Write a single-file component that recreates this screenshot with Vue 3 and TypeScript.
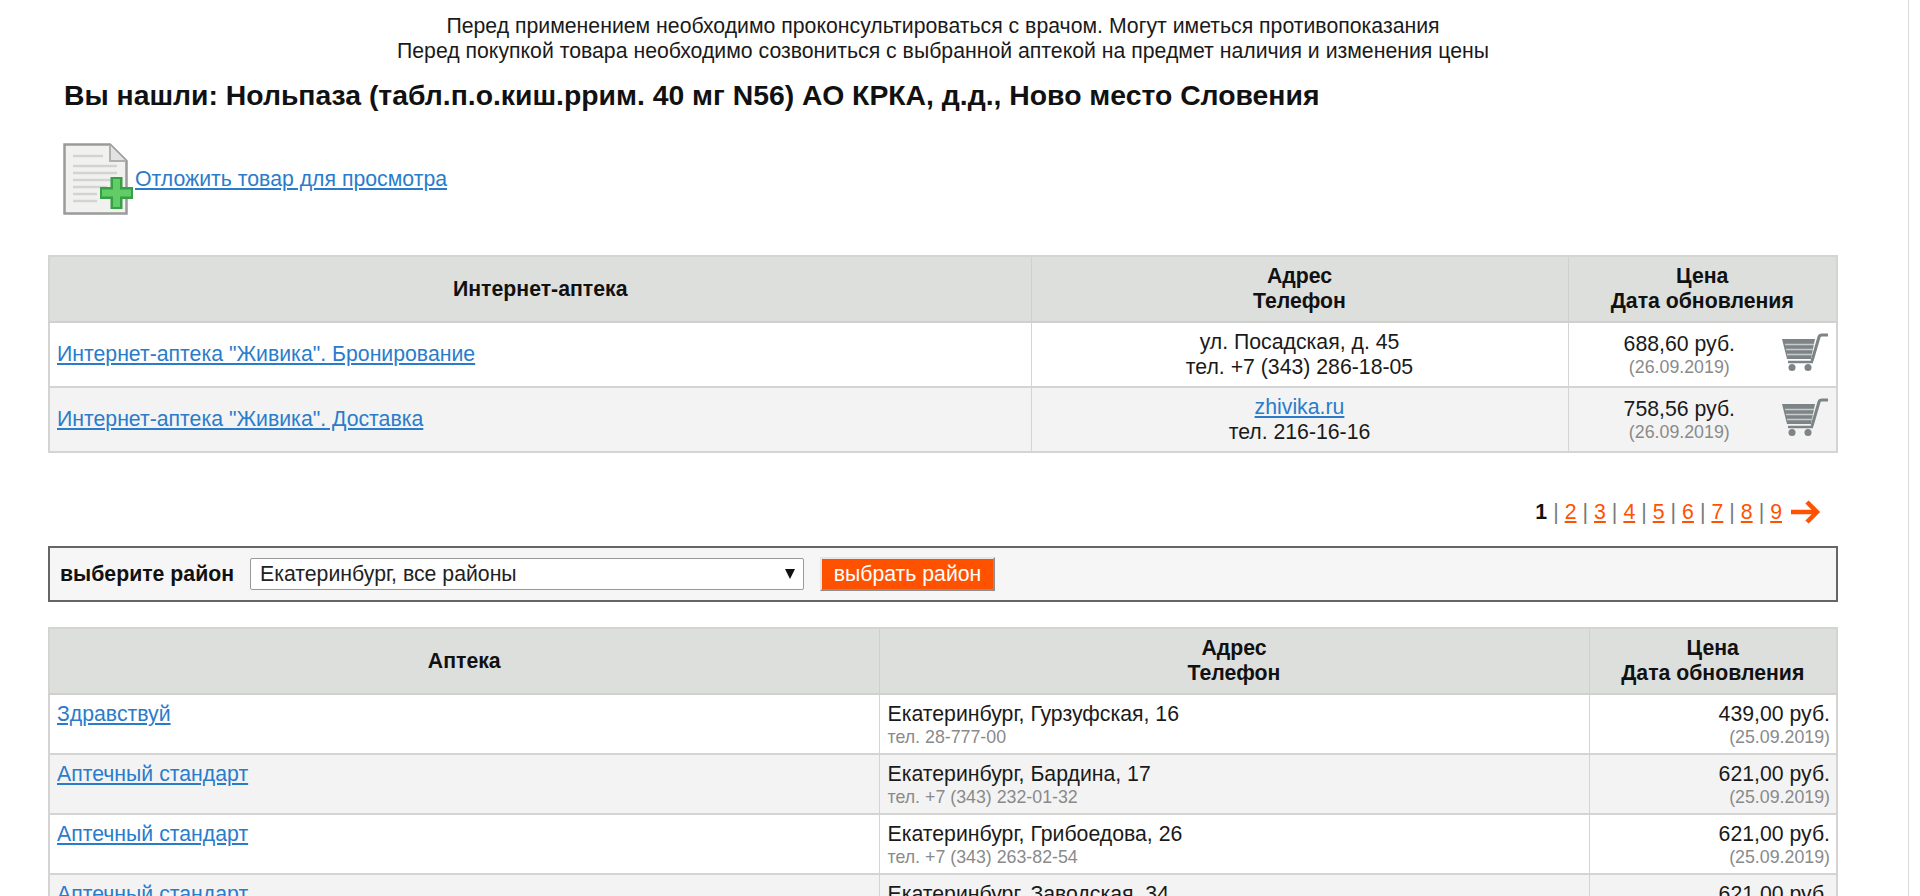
<script setup lang="ts">
interface Offer {
  name: string
  address: string
  phone: string
  price: string
  date: string
}

const offers: Offer[] = [
  { name: 'Здравствуй', address: 'Екатеринбург, Гурзуфская, 16', phone: 'тел. 28-777-00', price: '439,00 руб.', date: '(25.09.2019)' },
  { name: 'Аптечный стандарт', address: 'Екатеринбург, Бардина, 17', phone: 'тел. +7 (343) 232-01-32', price: '621,00 руб.', date: '(25.09.2019)' },
  { name: 'Аптечный стандарт', address: 'Екатеринбург, Грибоедова, 26', phone: 'тел. +7 (343) 263-82-54', price: '621,00 руб.', date: '(25.09.2019)' },
  { name: 'Аптечный стандарт', address: 'Екатеринбург, Заводская, 34', phone: 'тел. +7 (343) 242-10-15', price: '621,00 руб.', date: '(25.09.2019)' },
]

const pages = [2, 3, 4, 5, 6, 7, 8, 9]
</script>

<template>
  <div class="page">
    <div class="notice">
      <div>Перед применением необходимо проконсультироваться с врачом. Могут иметься противопоказания</div>
      <div>Перед покупкой товара необходимо созвониться с выбранной аптекой на предмет наличия и изменения цены</div>
    </div>
    <h1 class="title">Вы нашли: Нольпаза (табл.п.о.киш.ррим. 40 мг N56) АО КРКА, д.д., Ново место Словения</h1>

    <div class="defer">
      <svg class="doc-icon" width="72" height="72" viewBox="0 0 72 72">
        <path d="M1.500 1.500H47L63.500 18V70.500H1.500Z" fill="#f1f2f0" stroke="#9a9a9a" stroke-width="2.500" />
        <path d="M47 2V18H63" fill="#e2e2e2" stroke="#b0b0b0" stroke-width="2" />
        <path d="M10 13H40M10 23H54M10 30H54M10 37H54M10 44H44M10 51H34M10 58H34" stroke="#d3d4d2" stroke-width="2.500" />
        <path d="M37 50H70M53.500 34V66" stroke="#35a045" stroke-width="12" />
        <path d="M39 50H68M53.500 36V64" stroke="#62cc66" stroke-width="7" />
      </svg>
      <a href="#" class="link">Отложить товар для просмотра</a>
    </div>

    <table class="grid net">
      <colgroup>
        <col class="net-c1" />
        <col class="net-c2" />
        <col />
      </colgroup>
      <thead>
        <tr>
          <th>Интернет-аптека</th>
          <th>Адрес<br />Телефон</th>
          <th>Цена<br />Дата обновления</th>
        </tr>
      </thead>
      <tbody>
        <tr>
          <td><a href="#" class="link">Интернет-аптека "Живика". Бронирование</a></td>
          <td class="center">ул. Посадская, д. 45<br />тел. +7 (343) 286-18-05</td>
          <td>
            <div class="buy">
              <div class="buy-price">688,60 руб.<small>(26.09.2019)</small></div>
              <svg class="cart" width="48" height="38" viewBox="0 0 48 38">
                <path d="M1 6H34L30 26H6Z" fill="#7d8486" />
                <path d="M4 11.500H33M5 16.500H32M6 21.500H31" stroke="#c9cccd" stroke-width="1.500" />
                <path d="M31 28L38 4Q38.500 2 41 2H47" fill="none" stroke="#7d8486" stroke-width="3" />
                <path d="M7 29H32" stroke="#7d8486" stroke-width="2.500" />
                <circle cx="11" cy="34.500" r="3.500" fill="#7d8486" />
                <circle cx="27" cy="34.500" r="3.500" fill="#7d8486" />
              </svg>
            </div>
          </td>
        </tr>
        <tr>
          <td><a href="#" class="link">Интернет-аптека "Живика". Доставка</a></td>
          <td class="center"><a href="#" class="link">zhivika.ru</a><br />тел. 216-16-16</td>
          <td>
            <div class="buy">
              <div class="buy-price">758,56 руб.<small>(26.09.2019)</small></div>
              <svg class="cart" width="48" height="38" viewBox="0 0 48 38">
                <path d="M1 6H34L30 26H6Z" fill="#7d8486" />
                <path d="M4 11.500H33M5 16.500H32M6 21.500H31" stroke="#c9cccd" stroke-width="1.500" />
                <path d="M31 28L38 4Q38.500 2 41 2H47" fill="none" stroke="#7d8486" stroke-width="3" />
                <path d="M7 29H32" stroke="#7d8486" stroke-width="2.500" />
                <circle cx="11" cy="34.500" r="3.500" fill="#7d8486" />
                <circle cx="27" cy="34.500" r="3.500" fill="#7d8486" />
              </svg>
            </div>
          </td>
        </tr>
      </tbody>
    </table>

    <div class="pager">
      <b>1</b>
      <template v-for="p in pages" :key="p">
        <span class="sep">|</span>
        <a href="#" class="page-link">{{ p }}</a>
      </template>
      <svg class="next" width="32" height="26" viewBox="0 0 32 26">
        <path d="M2 13H27M18 3L28 13L18 23" fill="none" stroke="#ff5200" stroke-width="4.500" />
      </svg>
    </div>

    <div class="district">
      <b>выберите район</b>
      <div class="select">
        <span>Екатеринбург, все районы</span>
        <span class="arrow"></span>
      </div>
      <button class="pick">выбрать район</button>
    </div>

    <table class="grid pharm">
      <colgroup>
        <col class="ph-c1" />
        <col class="ph-c2" />
        <col />
      </colgroup>
      <thead>
        <tr>
          <th>Аптека</th>
          <th>Адрес<br />Телефон</th>
          <th>Цена<br />Дата обновления</th>
        </tr>
      </thead>
      <tbody>
        <tr v-for="(o, i) in offers" :key="i">
          <td class="top"><a href="#" class="link">{{ o.name }}</a></td>
          <td class="top addr">{{ o.address }}<small>{{ o.phone }}</small></td>
          <td class="top right">{{ o.price }}<small>{{ o.date }}</small></td>
        </tr>
      </tbody>
    </table>
  </div>
</template>

<style>
html,
body {
  background: #fff;
  height: 100%;
  overflow: hidden;
}
</style>

<style scoped>
.page {
  box-sizing: border-box;
  width: 1909px;
  height: 896px;
  overflow: hidden;
  padding: 14px 70px 0 48px;
  border-right: 1px solid #d9d9d9;
  font-family: "Liberation Sans", Arial, sans-serif;
  font-size: 21.25px;
  color: #1a1a1a;
}
.notice {
  text-align: center;
  line-height: 25px;
}
.title {
  margin: 15px 0 0 16px;
  font-size: 28.35px;
  line-height: 32px;
  font-weight: bold;
  color: #111;
}
.defer {
  display: flex;
  align-items: center;
  margin: 32px 0 0 15px;
  height: 72px;
}
.doc-icon {
  flex: none;
}
.link {
  color: #2a7ccb;
  text-decoration: underline;
}
.grid {
  width: 100%;
  border-collapse: collapse;
  table-layout: fixed;
  border: 2px solid #d4d5d3;
}
.net {
  margin-top: 40px;
}
.net-c1 {
  width: 982px;
}
.net-c2 {
  width: 537px;
}
.ph-c1 {
  width: 830px;
}
.ph-c2 {
  width: 710px;
}
th {
  height: 66px;
  padding: 0 8px;
  box-sizing: border-box;
  background: #dddfdd;
  border: 1px solid #d0d1cf;
  border-bottom-width: 2px;
  font-size: 21.25px;
  line-height: 25px;
  font-weight: bold;
  color: #111;
}
td {
  padding: 0 7px;
  box-sizing: border-box;
  border: 1px solid #d4d5d3;
  border-bottom-width: 2px;
  line-height: 25px;
  vertical-align: middle;
}
.net td {
  height: 65px;
}
.pharm td {
  height: 60px;
}
tbody tr:nth-child(even) td {
  background: #f3f3f3;
}
.center {
  text-align: center;
}
.right {
  text-align: right;
}
td.top {
  vertical-align: top;
  padding-top: 7px;
  line-height: 24px;
}
td.addr {
  padding-left: 8px;
}
td.right {
  padding-right: 6px;
}
small {
  display: block;
  font-size: 17.8px;
  line-height: 22px;
  color: #8a8a8a;
}
.buy {
  display: flex;
  align-items: center;
  justify-content: flex-end;
}
.buy-price {
  text-align: center;
  margin-right: 46px;
  line-height: 24px;
}
.cart {
  flex: none;
  margin-bottom: 6px;
}
.pager {
  display: flex;
  align-items: center;
  justify-content: flex-end;
  height: 30px;
  margin-top: 44px;
  padding-right: 17px;
  gap: 6px;
}
.pager b {
  color: #111;
}
.sep {
  color: #777;
}
.page-link {
  color: #ff5200;
  text-decoration: underline;
}
.next {
  margin-left: 1px;
}
.district {
  display: flex;
  align-items: center;
  box-sizing: border-box;
  height: 56px;
  margin-top: 19px;
  padding-left: 10px;
  background: #f6f6f6;
  border: 2px solid #666;
}
.district b {
  color: #111;
}
.select {
  display: flex;
  align-items: center;
  justify-content: space-between;
  box-sizing: border-box;
  width: 554px;
  height: 32px;
  margin-left: 16px;
  padding: 0 8px 0 9px;
  background: #fff;
  border: 1px solid #999;
  border-radius: 2px;
  color: #222;
}
.arrow {
  width: 0;
  height: 0;
  border-left: 5px solid transparent;
  border-right: 5px solid transparent;
  border-top: 10px solid #111;
}
.pick {
  box-sizing: border-box;
  width: 175px;
  height: 34px;
  margin-left: 16px;
  padding: 0;
  background: #ff5200;
  border: 2px solid;
  border-color: #e6e6e6 #8f8f8f #8f8f8f #e6e6e6;
  font-family: inherit;
  font-size: 21.25px;
  color: #fff;
}
.pharm {
  margin-top: 25px;
}
</style>
